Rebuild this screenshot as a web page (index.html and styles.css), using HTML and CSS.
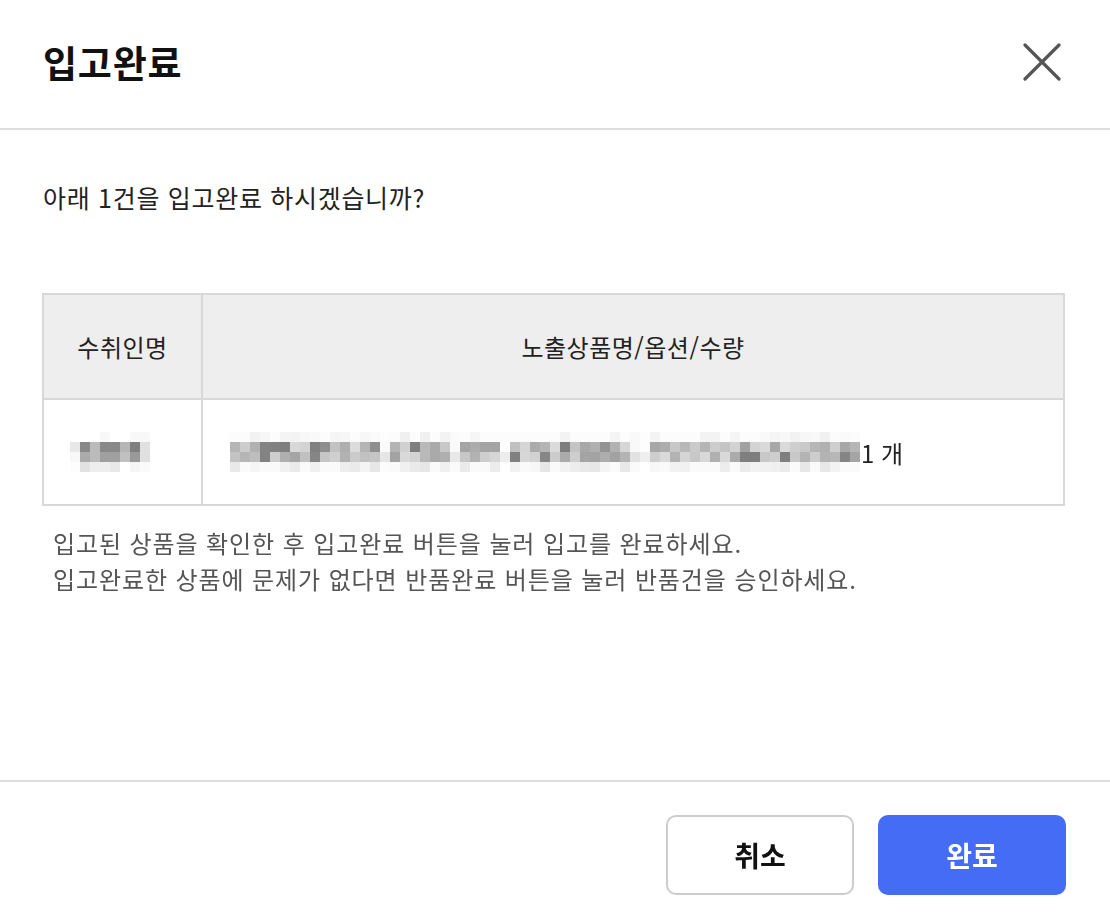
FILE: index.html
```html
<!DOCTYPE html>
<html lang="ko">
<head>
<meta charset="utf-8">
<title>입고완료</title>
<link rel="stylesheet" href="styles.css">
</head>
<body>
<div class="modal">
  <header class="modal-header">
    <h1 class="modal-title">입고완료</h1>
    <button class="close-btn" aria-label="닫기">
      <svg width="38" height="38" viewBox="0 0 38 38"><path d="M2 2 L36 36 M36 2 L2 36" stroke="#555" stroke-width="3.2" stroke-linecap="round" fill="none"/></svg>
    </button>
  </header>
  <main class="modal-body">
    <p class="question">아래 1건을 입고완료 하시겠습니까?</p>
    <table class="items">
      <thead>
        <tr>
          <th class="col-name">수취인명</th>
          <th class="col-product">노출상품명/옵션/수량</th>
        </tr>
      </thead>
      <tbody>
        <tr>
          <td class="cell-name"><canvas id="m-name" class="mosaic" width="80" height="40"></canvas></td>
          <td class="cell-product"><span class="product"><canvas id="m-product" class="mosaic" width="630" height="40"></canvas><span class="qty">1 개</span></span></td>
        </tr>
      </tbody>
    </table>
    <div class="notes">
      <p>입고된 상품을 확인한 후 입고완료 버튼을 눌러 입고를 완료하세요.</p>
      <p>입고완료한 상품에 문제가 없다면 반품완료 버튼을 눌러 반품건을 승인하세요.</p>
    </div>
  </main>
  <footer class="modal-footer">
    <button class="btn btn-cancel">취소</button>
    <button class="btn btn-primary">완료</button>
  </footer>
</div>
<script src="script.js"></script>
</body>
</html>
```

FILE: styles.css
```css
* { box-sizing: border-box; }
html, body { margin: 0; padding: 0; background: #fff; }
body {
  font-family: "Noto Sans CJK KR", "Noto Sans", sans-serif;
  color: #222;
}
.modal {
  width: 1110px;
  height: 924px;
  display: flex;
  flex-direction: column;
}
.modal-header {
  height: 130px;
  flex: none;
  display: flex;
  align-items: center;
  justify-content: space-between;
  padding: 0 49px 4px 43px;
  border-bottom: 2px solid #dddddd;
}
.modal-title {
  margin: 0;
  font-size: 37px;
  font-weight: 700;
  color: #111;
  letter-spacing: 0.8px;
}
.close-btn {
  width: 38px;
  height: 38px;
  padding: 0;
  border: 0;
  background: none;
  display: flex;
}
.modal-body {
  flex: 1;
  padding: 49px 45px 0 42px;
}
.question {
  margin: 0;
  font-size: 25px;
  line-height: 36px;
  color: #222;
  padding-left: 1px;
  letter-spacing: 0.7px;
}
.items {
  margin-top: 78px;
  width: 100%;
  border-collapse: collapse;
  border: 2px solid #d8d8d8;
}
.items th, .items td {
  border: 2px solid #d8d8d8;
  font-size: 24px;
  font-weight: 400;
  color: #222;
}
.items th {
  background: #eeeeee;
  height: 105px;
  text-align: center;
  letter-spacing: 0.5px;
}
.col-name { width: 159px; }
.items td { height: 106px; }
.cell-name { padding: 0 0 0 26px; }
.cell-product { padding: 0 0 0 27px; }
.product {
  display: flex;
  align-items: center;
}
.mosaic { display: block; }
.qty {
  margin-left: 1px;
  font-size: 24px;
  color: #222;
}
.notes {
  margin-top: 19px;
  padding-left: 11px;
  font-size: 24px;
  line-height: 36px;
  color: #555;
  letter-spacing: 0.9px;
}
.notes p { margin: 0; }
.modal-footer {
  flex: none;
  height: 144px;
  border-top: 2px solid #dddddd;
  display: flex;
  justify-content: flex-end;
  align-items: flex-start;
  gap: 24px;
  padding: 33px 44px 0 0;
}
.btn {
  width: 188px;
  height: 80px;
  border-radius: 10px;
  font-family: "Noto Sans CJK KR", "Noto Sans", sans-serif;
  font-size: 28px;
  font-weight: 700;
  cursor: pointer;
}
.btn-cancel {
  background: #fff;
  border: 2px solid #cccccc;
  color: #111;
}
.btn-primary {
  background: #446cf5;
  border: 0;
  color: #fff;
}
```

FILE: script.js
```js
(function () {
  function rng(seed) {
    return function () {
      seed |= 0; seed = seed + 0x6D2B79F5 | 0;
      var t = Math.imul(seed ^ seed >>> 15, 1 | seed);
      t = t + Math.imul(t ^ t >>> 7, 61 | t) ^ t;
      return ((t ^ t >>> 14) >>> 0) / 4294967296;
    };
  }
  function paint(ctx, x, y, v) {
    ctx.fillStyle = 'rgb(' + v + ',' + v + ',' + v + ')';
    ctx.fillRect(x * 10, y * 10, 10, 10);
  }
  /* recipient name mosaic, cell values read from the reference */
  var nameCells = [
    [255, 255, 255, 248, 255, 255, 248, 248],
    [232, 136, 187, 136, 136, 181, 127, 224],
    [248, 170, 187, 160, 160, 192, 153, 224],
    [253, 226, 238, 238, 232, 255, 245, 250]
  ];
  var nc = document.getElementById('m-name').getContext('2d');
  for (var y = 0; y < 4; y++) {
    for (var x = 0; x < 8; x++) paint(nc, x, y, nameCells[y][x]);
  }
  /* product name mosaic */
  var pc = document.getElementById('m-product').getContext('2d');
  var r = rng(42);
  var gaps = [15, 22, 27, 40, 41];
  for (var px = 0; px < 63; px++) {
    var gap = gaps.indexOf(px) >= 0;
    for (var py = 0; py < 4; py++) {
      var v;
      if (gap) {
        v = py === 2 ? 225 + r() * 25 : 248 + r() * 7;
      } else if (py === 0) {
        v = r() < 0.45 ? 240 + r() * 10 : 252;
      } else if (py === 3) {
        v = r() < 0.6 ? 228 + r() * 20 : 250;
      } else {
        var k = r();
        v = k < 0.2 ? 125 + r() * 25 : k < 0.6 ? 160 + r() * 25 : 190 + r() * 30;
      }
      paint(pc, px, py, Math.round(v));
    }
  }
})();
```
